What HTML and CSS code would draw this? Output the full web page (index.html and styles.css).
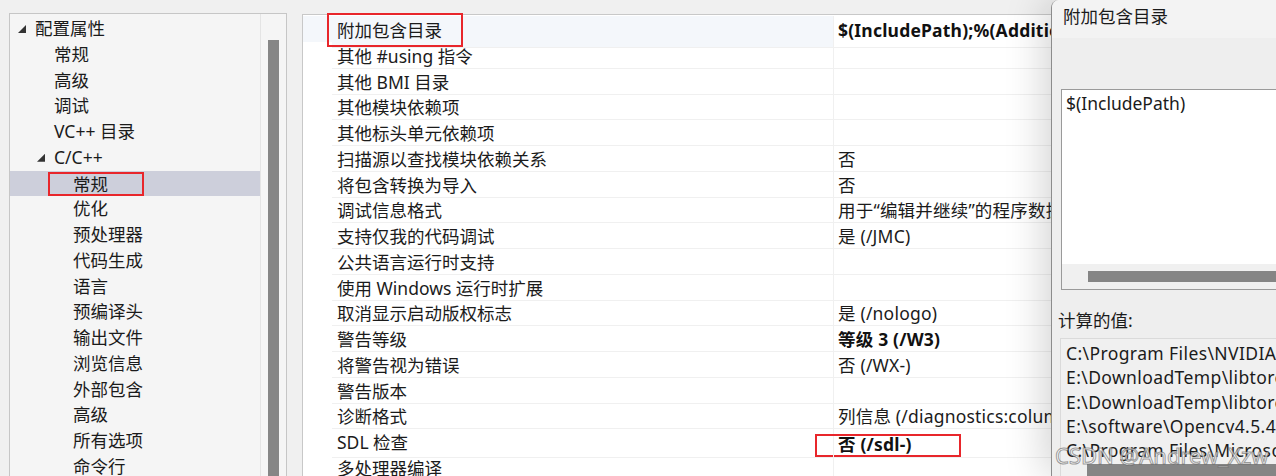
FILE: index.html
```html
<!DOCTYPE html>
<html lang="zh-CN">
<head>
<meta charset="utf-8">
<link rel="stylesheet" href="styles.css">
</head>
<body>
<div class="page">
  <div class="tree-pane">
    <div class="tree">
      <div class="node lvl0"><span class="tri"></span>配置属性</div>
      <div class="node lvl1">常规</div>
      <div class="node lvl1">高级</div>
      <div class="node lvl1">调试</div>
      <div class="node lvl1">VC++ 目录</div>
      <div class="node lvl1b"><span class="tri"></span>C/C++</div>
      <div class="node lvl2s selected"><span class="mark">常规</span></div>
      <div class="node lvl2">优化</div>
      <div class="node lvl2">预处理器</div>
      <div class="node lvl2">代码生成</div>
      <div class="node lvl2">语言</div>
      <div class="node lvl2">预编译头</div>
      <div class="node lvl2">输出文件</div>
      <div class="node lvl2">浏览信息</div>
      <div class="node lvl2">外部包含</div>
      <div class="node lvl2">高级</div>
      <div class="node lvl2">所有选项</div>
      <div class="node lvl2">命令行</div>
    </div>
    <div class="vscroll"><div class="vthumb"></div></div>
  </div>

  <div class="grid-pane">
    <div class="prop first"><div class="name"><span class="mark-top">附加包含目录</span></div><div class="val bold">$(IncludePath);%(AdditionalIncludeDirectories)</div></div>
    <div class="prop"><div class="name">其他 #using 指令</div><div class="val"></div></div>
    <div class="prop"><div class="name">其他 BMI 目录</div><div class="val"></div></div>
    <div class="prop"><div class="name">其他模块依赖项</div><div class="val"></div></div>
    <div class="prop"><div class="name">其他标头单元依赖项</div><div class="val"></div></div>
    <div class="prop"><div class="name">扫描源以查找模块依赖关系</div><div class="val">否</div></div>
    <div class="prop"><div class="name">将包含转换为导入</div><div class="val">否</div></div>
    <div class="prop"><div class="name">调试信息格式</div><div class="val">用于“编辑并继续”的程序数据库 (/ZI)</div></div>
    <div class="prop"><div class="name">支持仅我的代码调试</div><div class="val">是 (/JMC)</div></div>
    <div class="prop"><div class="name">公共语言运行时支持</div><div class="val"></div></div>
    <div class="prop"><div class="name">使用 Windows 运行时扩展</div><div class="val"></div></div>
    <div class="prop"><div class="name">取消显示启动版权标志</div><div class="val">是 (/nologo)</div></div>
    <div class="prop"><div class="name">警告等级</div><div class="val bold">等级 3 (/W3)</div></div>
    <div class="prop"><div class="name">将警告视为错误</div><div class="val">否 (/WX-)</div></div>
    <div class="prop"><div class="name">警告版本</div><div class="val"></div></div>
    <div class="prop"><div class="name">诊断格式</div><div class="val">列信息 (/diagnostics:column)</div></div>
    <div class="prop"><div class="name">SDL 检查</div><div class="val bold"><span class="mark-sdl">否 (/sdl-)</span></div></div>
    <div class="prop"><div class="name">多处理器编译</div><div class="val"></div></div>
  </div>
</div>

<div class="dialog">
  <div class="dlg-title">附加包含目录</div>
  <div class="dlg-body">
    <div class="editbox">
      <div class="edit-text">$(IncludePath)</div>
      <div class="hscroll"><div class="hthumb"></div></div>
    </div>
    <div class="label">计算的值:</div>
    <div class="listbox">
      <div class="li">C:\Program Files\NVIDIA GPU Computing Toolkit\CUDA\v11.6\include</div>
      <div class="li">E:\DownloadTemp\libtorch\include</div>
      <div class="li">E:\DownloadTemp\libtorch\include\torch\csrc\api\include</div>
      <div class="li">E:\software\Opencv4.5.4\opencv\build\include</div>
      <div class="li">C:\Program Files\Microsoft Visual Studio\2022\Community</div>
      <div class="hscroll2"><div class="hthumb2"></div></div>
    </div>
  </div>
  <div class="watermark">CSDN @Andrew_Xzw</div>
</div>
</body>
</html>
```

FILE: styles.css
```css
* { box-sizing: border-box; }
html, body { margin: 0; padding: 0; }
body {
  width: 1276px;
  height: 476px;
  overflow: hidden;
  background: #f0f0f0;
  font-family: "Noto Sans", "Noto Sans CJK SC", sans-serif;
  font-size: 17.5px;
  color: #1b1b1b;
  position: relative;
}
.page {
  display: flex;
  align-items: flex-start;
  padding-left: 9px;
  height: 476px;
  overflow: hidden;
}
.tree-pane {
  margin-top: 13px;
  width: 278px;
  height: 480px;
  border: 1px solid #c6c6c6;
  background: #f5f5f5;
  display: flex;
}
.tree {
  width: 250px;
  padding-top: 2px;
  flex: none;
}
.node {
  height: 25.75px;
  line-height: 25.75px;
  white-space: nowrap;
  display: flex;
  align-items: center;
}
.lvl0 { padding-left: 8px; }
.lvl1 { padding-left: 44px; }
.lvl1b { padding-left: 27px; }
.lvl2 { padding-left: 63px; }
.lvl2s { padding-left: 38px; }
.tri {
  width: 8px;
  height: 8px;
  margin-right: 9px;
  background: #333;
  clip-path: polygon(100% 0, 100% 100%, 0 100%);
  flex: none;
}
.selected { background: #cdcfdb; }
.mark {
  border: 2px solid #e8262b;
  padding: 0 34px 0 23px;
  height: 24px;
  line-height: 20px;
  margin-top: 1px;
}
.vscroll {
  flex: 1;
  border-left: 1px solid #e4e4e4;
  padding: 26px 0 0 7px;
}
.vthumb {
  width: 11px;
  height: 460px;
  background: #868686;
}

.grid-pane {
  margin-left: 15px;
  margin-top: 14px;
  flex: 1;
  height: 480px;
  border: 1px solid #c8c8c8;
  border-right: none;
  background: #fff;
  padding-top: 1px;
}
.prop {
  display: grid;
  grid-template-columns: 530px 1fr;
  height: 25.75px;
}
.prop .name {
  padding-left: 34px;
  padding-top: 2px;
  line-height: 24px;
  white-space: nowrap;
  border-bottom: 1px solid #f0f0f0;
  position: relative;
}
.prop .name::after {
  content: "";
  position: absolute;
  left: 0; top: 0; bottom: -1px;
  width: 29px;
  background: #fff;
}
.prop.first .name,
.prop.first .name::after { background: #f4f7fb; }
.prop .val {
  padding-left: 4px;
  padding-top: 2px;
  line-height: 24px;
  white-space: nowrap;
  border-left: 1px solid #f0f0f0;
  border-bottom: 1px solid #f0f0f0;
  color: #1b1b1b;
  letter-spacing: 0.2px;
}
.bold { font-weight: bold; color: #111 !important; }
.mark-top {
  position: relative;
  z-index: 1;
  display: inline-block;
  border: 2px solid #e8262b;
  margin-left: -10px;
  margin-top: -5px;
  padding: 3px 19px 3px 8px;
  line-height: 24px;
}
.mark-sdl {
  display: inline-block;
  vertical-align: top;
  border: 2px solid #e8262b;
  margin-left: -23px;
  margin-top: 4px;
  padding: 0 47px 0 21px;
  height: 23px;
  line-height: 17px;
}

.dialog {
  position: absolute;
  left: 1051px;
  top: 0;
  right: 0;
  bottom: 0;
  background: #eeeeee;
  border-left: 1px solid #8c8c8c;
  border-top-left-radius: 8px;
  box-shadow: -6px 0 40px rgba(0,0,0,0.18);
  overflow: hidden;
}
.dlg-title {
  height: 38px;
  background: #f3f3f3;
  padding-left: 11px;
  line-height: 32px;
  white-space: nowrap;
}
.dlg-body {
  padding: 51px 0 0 8px;
}
.editbox {
  height: 201px;
  background: #fff;
  border: 1px solid #9a9a9a;
  border-right: none;
  margin-left: 1px;
  display: flex;
  flex-direction: column;
}
.edit-text {
  flex: 1;
  padding-left: 4px;
  line-height: 26px;
}
.hscroll {
  height: 25px;
  background: #f0f0f0;
  padding: 7px 0 0 26px;
}
.hthumb {
  height: 11px;
  background: #858585;
}
.label {
  margin-top: 19px;
  margin-left: -2px;
  line-height: 22px;
  white-space: nowrap;
}
.listbox {
  margin-top: 7px;
  border: 1px solid #dadada;
  border-right: none;
  background: #f0f0f0;
  padding: 2px 0 0 5px;
  height: 140px;
  overflow: hidden;
}
.li {
  height: 24.3px;
  line-height: 24.3px;
  white-space: nowrap;
  letter-spacing: 0.4px;
}
.hscroll2 {
  padding: 2px 0 0 21px;
}
.hthumb2 {
  height: 12px;
  background: #858585;
}
.watermark {
  position: absolute;
  left: 3px;
  top: 440px;
  font-family: "Noto Sans", sans-serif;
  font-size: 22px;
  white-space: nowrap;
  color: rgba(255,255,255,0.7);
  -webkit-text-stroke: 1px rgba(90,90,90,0.6);
}
```
